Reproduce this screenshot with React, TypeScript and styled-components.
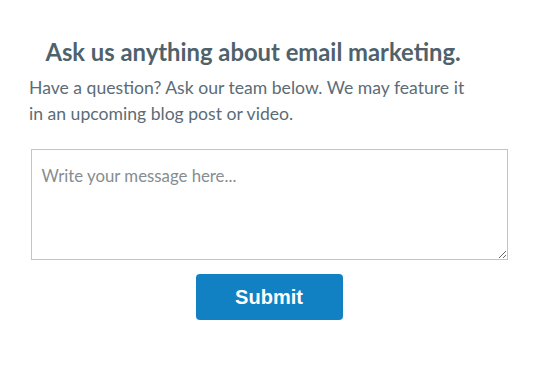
import React from "react";
import styled, { createGlobalStyle } from "styled-components";

const GlobalStyle = createGlobalStyle`
  html, body {
    margin: 0;
    padding: 0;
    background: #ffffff;
  }
  body {
    font-family: Lato, "Open Sans", sans-serif;
  }
`;

function App() {
  return (
    <>
      <GlobalStyle />
      <Page>
        <Intro>
          <Heading>Ask us anything about email marketing.</Heading>
          <Lead>
            Have a question? Ask our team below. We may feature it in an
            upcoming blog post or video.
          </Lead>
        </Intro>
        <Form onSubmit={(e) => e.preventDefault()}>
          <Message placeholder="Write your message here..." />
          <SubmitButton type="submit">Submit</SubmitButton>
        </Form>
      </Page>
    </>
  );
}

const Page = styled.main`
  padding: 38px 0 0 30px;
  width: 478px;
`;

const Intro = styled.div`
  width: 446px;
`;

const Heading = styled.h1`
  margin: 0;
  font-size: 23.8px;
  font-weight: 700;
  line-height: 28px;
  color: #4f626c;
  text-align: center;
`;

const Lead = styled.p`
  margin: 9px 0 0 -1px;
  font-size: 17.6px;
  line-height: 26px;
  color: #5b6c76;
`;

const Form = styled.form`
  display: flex;
  flex-direction: column;
  align-items: center;
  margin-top: 22px;
`;

const Message = styled.textarea`
  box-sizing: border-box;
  width: 477px;
  height: 111px;
  padding: 15px 10px 10px;
  border: 1.5px solid #c4c4c4;
  border-radius: 0;
  font-family: Lato, "Open Sans", sans-serif;
  font-size: 16.8px;
  line-height: 22px;
  color: #444;
  resize: vertical;

  &::placeholder {
    color: #868c90;
  }
`;

const SubmitButton = styled.button`
  margin-top: 14px;
  width: 147px;
  height: 46px;
  border: none;
  border-radius: 4px;
  background: #1181c3;
  color: #ffffff;
  font-family: "Liberation Sans", Arial, sans-serif;
  font-size: 20px;
  font-weight: 700;
  cursor: pointer;
`;

export default App;
